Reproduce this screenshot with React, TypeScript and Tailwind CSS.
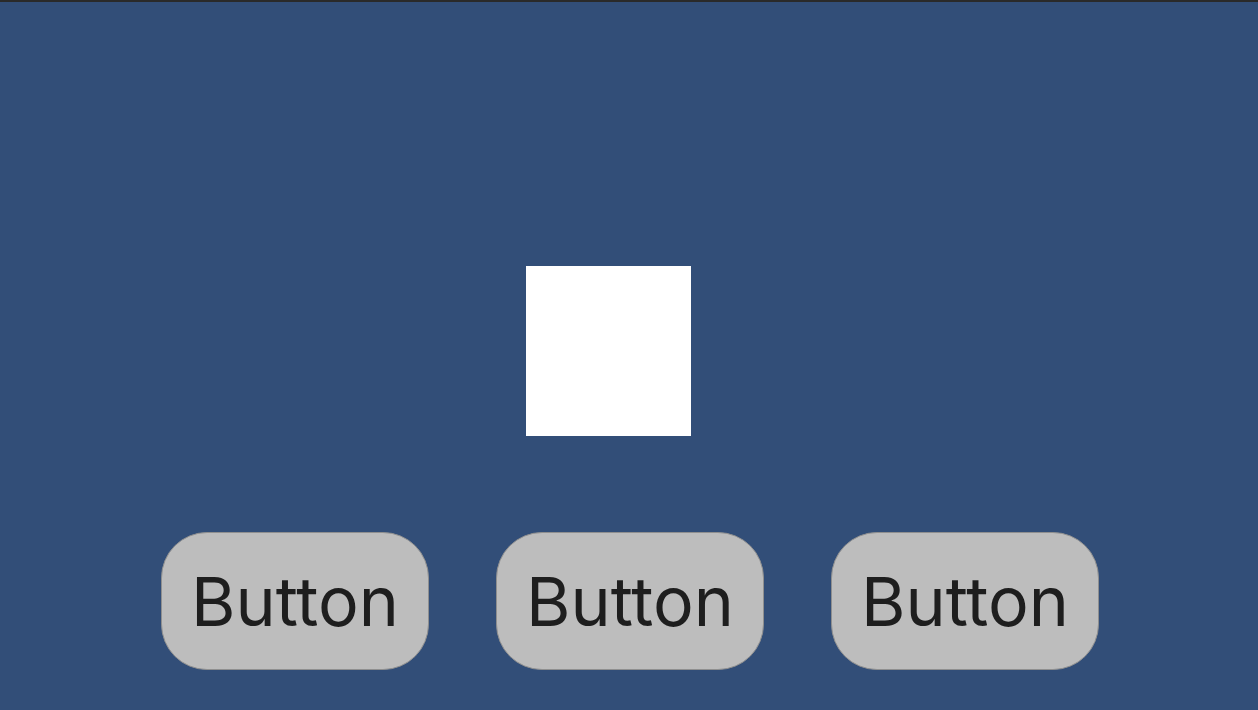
export default function App() {
  const labels = ["Button", "Button", "Button"];

  return (
    <div className="h-[710px] w-full overflow-hidden border-t-2 border-[#2a2a2a] bg-[#324e78] flex flex-col">
      {/* Image placeholder */}
      <div className="mt-[264px] ml-[526px] h-[170px] w-[165px] bg-white" />

      {/* Action row */}
      <div className="mt-[96px] pl-[2px] flex justify-center gap-[67px]">
        {labels.map((label, i) => (
          <button
            key={i}
            className="h-[138px] w-[268px] rounded-[46px] border border-[#8f8f8f] bg-[#bdbdbd] text-[#1e1e1e] text-[68px] leading-none flex items-center justify-center"
            style={{ fontFamily: "Inter, sans-serif" }}
          >
            {label}
          </button>
        ))}
      </div>
    </div>
  );
}
